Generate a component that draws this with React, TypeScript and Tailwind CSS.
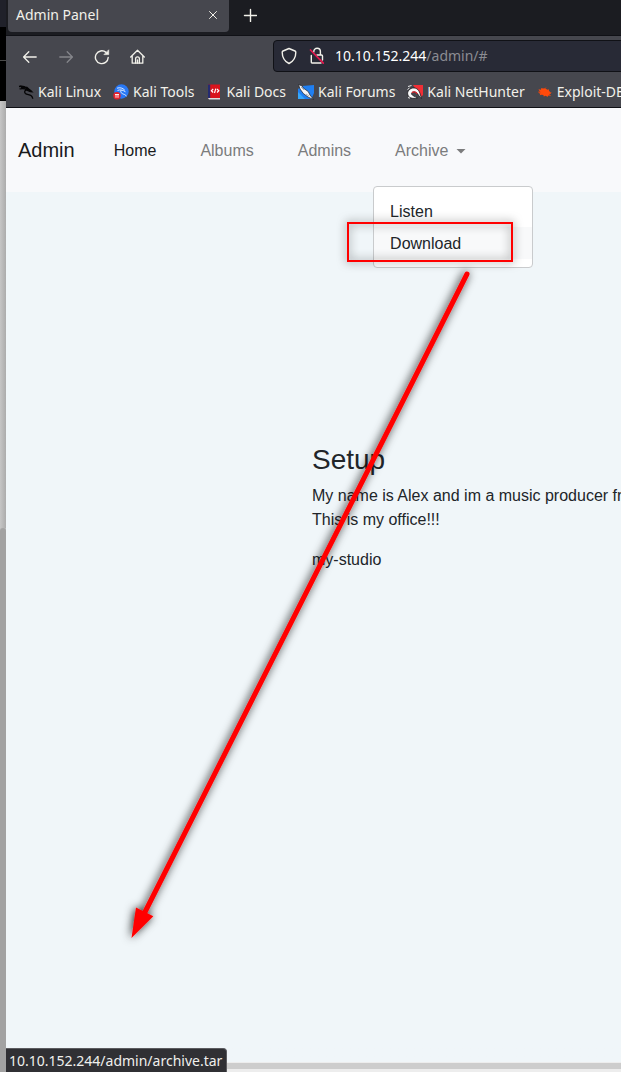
import React from "react";

const stroke = {
  fill: "none",
  stroke: "currentColor",
  strokeLinecap: "round" as const,
  strokeLinejoin: "round" as const,
};

function BackIcon() {
  return (
    <svg width="16" height="16" viewBox="0 0 16 16" {...stroke} strokeWidth="1.3">
      <path d="M14.2 8H1.8M6.8 2.8 1.6 8l5.2 5.2" />
    </svg>
  );
}

function ForwardIcon() {
  return (
    <svg width="16" height="16" viewBox="0 0 16 16" {...stroke} strokeWidth="1.3">
      <path d="M1.8 8h12.4M9.2 2.8 14.4 8l-5.2 5.2" />
    </svg>
  );
}

function ReloadIcon() {
  return (
    <svg width="16" height="16" viewBox="0 0 16 16" {...stroke} strokeWidth="1.4">
      <path d="M14.2 8.5A6.4 6.4 0 1 1 12 3.4" />
      <path d="M14.7 1.2v4.4h-4.4z" fill="currentColor" strokeWidth="0.7" />
    </svg>
  );
}

function HomeIcon() {
  return (
    <svg width="16" height="16" viewBox="0 0 16 16" {...stroke} strokeWidth="1.3">
      <path d="M.7 8 7.500 1.300 14.300 8M2.200 7v7.200h10.600V7" />
      <path d="M5.600 14V9.800a1.900 1.900 0 0 1 3.800 0V14M7.500 11v3" />
    </svg>
  );
}

function ShieldIcon() {
  return (
    <svg width="16" height="18" viewBox="0 0 16 18" {...stroke} strokeWidth="1.4">
      <path d="M8 1.500 14 4c.7.300.8.600.8 1.200 0 5.200-2.200 9-6.800 11.300C3.400 14.200 1.200 10.400 1.200 5.200c0-.6.1-.9.8-1.200z" />
    </svg>
  );
}

function InsecureIcon() {
  return (
    <svg width="16" height="18" viewBox="0 0 16 18" {...stroke} strokeWidth="1.4">
      <path d="M4.800 5V4.500a3.300 3.300 0 0 1 6.600 0V8M8 8h4.500c.7 0 1 .4 1 1v4M2.300 8.500v6.800c0 .4.200.7.700.7h9" />
      <path d="m1.500 3 12.800 13.200" stroke="#e2174d" strokeWidth="1.700" />
    </svg>
  );
}

const dragon =
  "M1 2.500c3-.8 5.500-.2 8 1.600M1.500 5c2.700-.9 5-.5 7.500.4 2 .1 3.600.8 4.800 2.300M9 5.400c-2.400.9-3 2.800-1.600 4.100 1.500 1.300 4.200 1 5.800 2.300 1 .8 1.500 1.900 1.600 3";

function KaliIcon() {
  return (
    <svg width="16" height="16" viewBox="0 0 16 16" fill="none" stroke="#050506" strokeWidth="1.300">
      <path d={dragon} />
      <path d="m9 3.500 4.800 4.200-1.500-.1-4-1.800zM2 2l5.500 2-4.500-.200" fill="#050506" />
    </svg>
  );
}

function ToolsIcon() {
  return (
    <svg width="16" height="16" viewBox="0 0 16 16">
      <circle cx="8.500" cy="7.500" r="7.200" fill="#2878f5" />
      <path
        d="M4 4.200c3-1 5.500-.3 7.800 2M4.500 6.500C7 5.400 9.500 5.800 12.500 7.800M8.500 6c-2 2 .3 3.700 3 4.500 1 .4 1.600 1 1.900 1.800"
        fill="none"
        stroke="#eef5ff"
        strokeWidth="0.900"
      />
      <circle cx="4" cy="11.800" r="3.700" fill="#e6202b" />
      <path d="M2 10.500h4M3 10.500v3.300M5 10.500v3.300" stroke="#fff" strokeWidth="0.900" />
    </svg>
  );
}

function DocsIcon() {
  return (
    <svg width="16" height="16" viewBox="0 0 16 16">
      <path d="M1 .5h12v14H1z" fill="#d9141c" />
      <path d="M1 .5h2.200v13.500H1z" fill="#252b70" />
      <path d="M1 14h12v1.500H2z" fill="#dedede" />
      <path
        d="M6.200 5 4.400 6.800l1.800 1.700M10 5l1.800 1.800L10 8.500M8.800 4.700 7.500 9"
        fill="none"
        stroke="#fff"
        strokeWidth="1.200"
      />
    </svg>
  );
}

function ForumsIcon() {
  return (
    <svg width="16" height="16" viewBox="0 0 16 16">
      <path d="M4 2 16 1v8l-2.500 6H0V5z" fill="#1f7ff2" />
      <path d="M0 8v7h7z" fill="#35a7fb" />
      <path
        d="M.5.500 4.200 2l1 2 5 3.500L12 11l3.500 4.500-5.200-2.300-5-3.700L2 5z"
        fill="#f4f5f7"
        stroke="#1a1c22"
        strokeWidth="0.700"
      />
      <path d="m3 3 3 3M8 10l3 2" stroke="#777b83" strokeWidth="0.600" />
    </svg>
  );
}

function NetHunterIcon() {
  return (
    <svg width="16" height="16" viewBox="0 0 16 16">
      <path d="M6 1h10v10l-2 2z" fill="#f02f36" />
      <path
        d="M14.500 14.500C11.500 13 11.500 9 8 8c-2.500-.5-4 1-3.300 2.300.8 1.500 3.300 2.200 5.800 3.500-5 1.500-9.500 0-9.900-4C.4 6 4.500 3 8.500 4.200c4 1.300 4.500 5.500 6 10.300z"
        fill="#fafafa"
        stroke="#16171b"
        strokeWidth="0.800"
      />
      <path d="M1 2.500 4.500 1.500M.5 5.500l2-1.500M1 13.500l2 .7" stroke="#e9e9e9" strokeWidth="1" />
      <path d="M5 8.800c1.200-1.800 4-1 5.200 1.200" fill="none" stroke="#d9242d" strokeWidth="1.300" />
    </svg>
  );
}

function ExploitIcon() {
  return (
    <svg width="16" height="16" viewBox="0 0 16 16">
      <path
        d="M1.500 5.200 4 5.700 4.300 4l1.700.5 2-.3 2.500 1.500 1.300-.5.200 1.500 1.500 1.800 1-.2-.7 1.500-1.300.1.200 2.100-1.700-.5-.3 1.500-2-1.300-2 .8-.3-1.500-2-.2-1.600.5.500-1.600-2.100-1L3 8.100z"
        fill="#ff4a0b"
      />
      <path d="m1 7.800 3 .4M9 3.400l-.8 1.400M14 11.800l-2-1.300" stroke="#d94210" strokeWidth="0.700" />
    </svg>
  );
}

const bookmarks = [
  { name: "Kali Linux", icon: <KaliIcon /> },
  { name: "Kali Tools", icon: <ToolsIcon /> },
  { name: "Kali Docs", icon: <DocsIcon /> },
  { name: "Kali Forums", icon: <ForumsIcon /> },
  { name: "Kali NetHunter", icon: <NetHunterIcon /> },
  { name: "Exploit-DB", icon: <ExploitIcon /> },
];

function WindowBehind() {
  return (
    <div className="flex w-1.5 shrink-0 flex-col bg-[#c1c1c1]" aria-hidden="true">
      <div className="h-[27px] bg-[#20212a]" />
      <div className="h-[33px] bg-black" />
      <div className="h-px bg-[#4a4a4a]" />
      <div className="h-10 bg-black" />
      <div className="h-[427px] bg-linear-to-r from-[#c6c6c6] to-[#acacac]" />
      <div className="flex-1 rounded-t-sm bg-[#a2a2a2]" />
    </div>
  );
}

function BrowserChrome() {
  return (
    <header className="shrink-0 text-[#f2f1ea]">
      <div className="flex h-[35px] items-start bg-[#1b1c21]">
        <div className="ml-0.5 flex h-8 w-[221px] items-center justify-between rounded-b bg-[#46474e] pr-2.5 pb-0.5 pl-2">
          <span className="text-sm">Admin Panel</span>
          <button aria-label="Close tab" className="flex size-3 items-center justify-center">
            <svg width="10" height="10" viewBox="0 0 10 10" {...stroke} strokeWidth="1">
              <path d="m1.500 1.500 7 7M8.500 1.500l-7 7" />
            </svg>
          </button>
        </div>
        <button aria-label="New tab" className="mt-2 ml-3.5 flex size-3.5 items-center justify-center">
          <svg width="14" height="14" viewBox="0 0 14 14" {...stroke} strokeWidth="1.4">
            <path d="M7.500 1.500v12M1.500 7.500h12" />
          </svg>
        </button>
      </div>
      <div className="border-y border-[#101116] bg-[#46474e]">
        <div className="flex h-10 items-center">
          <div className="flex w-[267px] shrink-0 items-center gap-5 pt-0.5 pl-4">
            <button aria-label="Back"><BackIcon /></button>
            <button aria-label="Forward" className="text-[#85868b]"><ForwardIcon /></button>
            <button aria-label="Reload"><ReloadIcon /></button>
            <button aria-label="Home"><HomeIcon /></button>
          </div>
          <div className="-mr-2 flex h-8 min-w-0 flex-1 items-center gap-3 rounded border border-[#101116] bg-[#282a36] pl-[7px]">
            <ShieldIcon />
            <InsecureIcon />
            <div className="-ml-0.5 min-w-0 flex-1 text-sm whitespace-nowrap text-white">
              10.10.152.244<span className="text-[#8b8c92]">/admin/#</span>
            </div>
          </div>
        </div>
        <nav aria-label="Bookmarks" className="flex h-[31px] items-center gap-3 overflow-hidden pl-3 text-sm whitespace-nowrap">
          {bookmarks.map((b) => (
            <a key={b.name} href="#" className="flex shrink-0 items-center gap-1">
              {b.icon}
              <span>{b.name}</span>
            </a>
          ))}
        </nav>
      </div>
    </header>
  );
}

function SiteNav() {
  return (
    <nav className="flex shrink-0 items-center bg-[#f8f9fb] px-3 py-2 text-base leading-6">
      <a href="#" className="mr-[17px] text-xl text-[#191a1b]">Admin</a>
      <ul className="flex text-[#7b7c7d]">
        <li><a href="#" className="block px-[22px] pt-[23px] pb-[21px] text-[#191a1b]">Home</a></li>
        <li><a href="#" className="block px-[22px] pt-[23px] pb-[21px]">Albums</a></li>
        <li><a href="#" className="block px-[22px] pt-[23px] pb-[21px]">Admins</a></li>
        <li className="relative">
          <button aria-expanded="true" className="flex items-center gap-2 px-[22px] pt-[23px] pb-[21px]">
            Archive
            <svg width="10" height="5" viewBox="0 0 10 5" aria-hidden="true">
              <path d="M.5 0h9L5 4.600z" fill="currentColor" />
            </svg>
          </button>
          <ul className="absolute top-full left-0 mt-0.5 w-40 rounded border border-[#c9cbcd] bg-white py-2 text-[#212529]">
            <li><a href="#" className="block px-4 pt-[5px] pb-[3px]">Listen</a></li>
            <li><a href="#" className="block bg-[#f8f9fa] px-4 pt-[5px] pb-[3px]">Download</a></li>
          </ul>
        </li>
      </ul>
    </nav>
  );
}

function Annotations() {
  return (
    <svg
      className="pointer-events-none absolute top-0 left-0 overflow-visible"
      width="540"
      height="960"
      viewBox="0 0 540 960"
      aria-hidden="true"
    >
      <defs>
        <filter id="glow" x="-20%" y="-40%" width="140%" height="180%">
          <feDropShadow dx="0" dy="0" stdDeviation="5" floodColor="#000" floodOpacity="0.65" />
        </filter>
        <filter id="cast" x="-10%" y="-5%" width="120%" height="110%">
          <feDropShadow dx="-1" dy="0" stdDeviation="5" floodColor="#000" floodOpacity="0.9" />
        </filter>
      </defs>
      <rect x="348" y="223" width="164" height="38" fill="none" stroke="#f00" strokeWidth="2" filter="url(#glow)" />
      <g filter="url(#cast)">
        <path d="M467 274 144 914" stroke="#f00" strokeWidth="5" strokeLinecap="round" />
        <path d="m131.500 938 4.500-30.500 17.300 8.800z" fill="#f00" />
      </g>
    </svg>
  );
}

export default function App() {
  return (
    <div className="relative flex min-h-screen overflow-hidden bg-[#f0f6f9] font-['Noto_Sans',sans-serif]">
      <WindowBehind />
      <div className="flex min-w-0 flex-1 flex-col">
        <BrowserChrome />
        <div className="flex flex-1 flex-col font-['Liberation_Sans',sans-serif] text-[#212529]">
          <SiteNav />
          <main className="flex-1 pt-[251px] pl-[306px] text-base leading-6 whitespace-nowrap">
            <h3 className="mb-[7px] text-[28px] leading-[34px]">Setup</h3>
            <p className="mb-4">
              My name is Alex and im a music producer from
              <br />
              This is my office!!!
            </p>
            <p>my-studio</p>
          </main>
        </div>
        <footer className="flex h-6 items-end bg-linear-to-b from-[#f0f6f9] from-60% to-[#ededed] to-60%">
          <div className="flex h-6 items-center rounded-tr border-t border-r border-[#5c5c60] bg-[#303034] pr-1 pl-[3px] text-sm whitespace-nowrap text-[#efefec]">
            10.10.152.244/admin/archive.tar
          </div>
          <div className="mb-[3px] h-1.5 flex-1 bg-[#cdcdcd]" />
        </footer>
      </div>
      <Annotations />
    </div>
  );
}
